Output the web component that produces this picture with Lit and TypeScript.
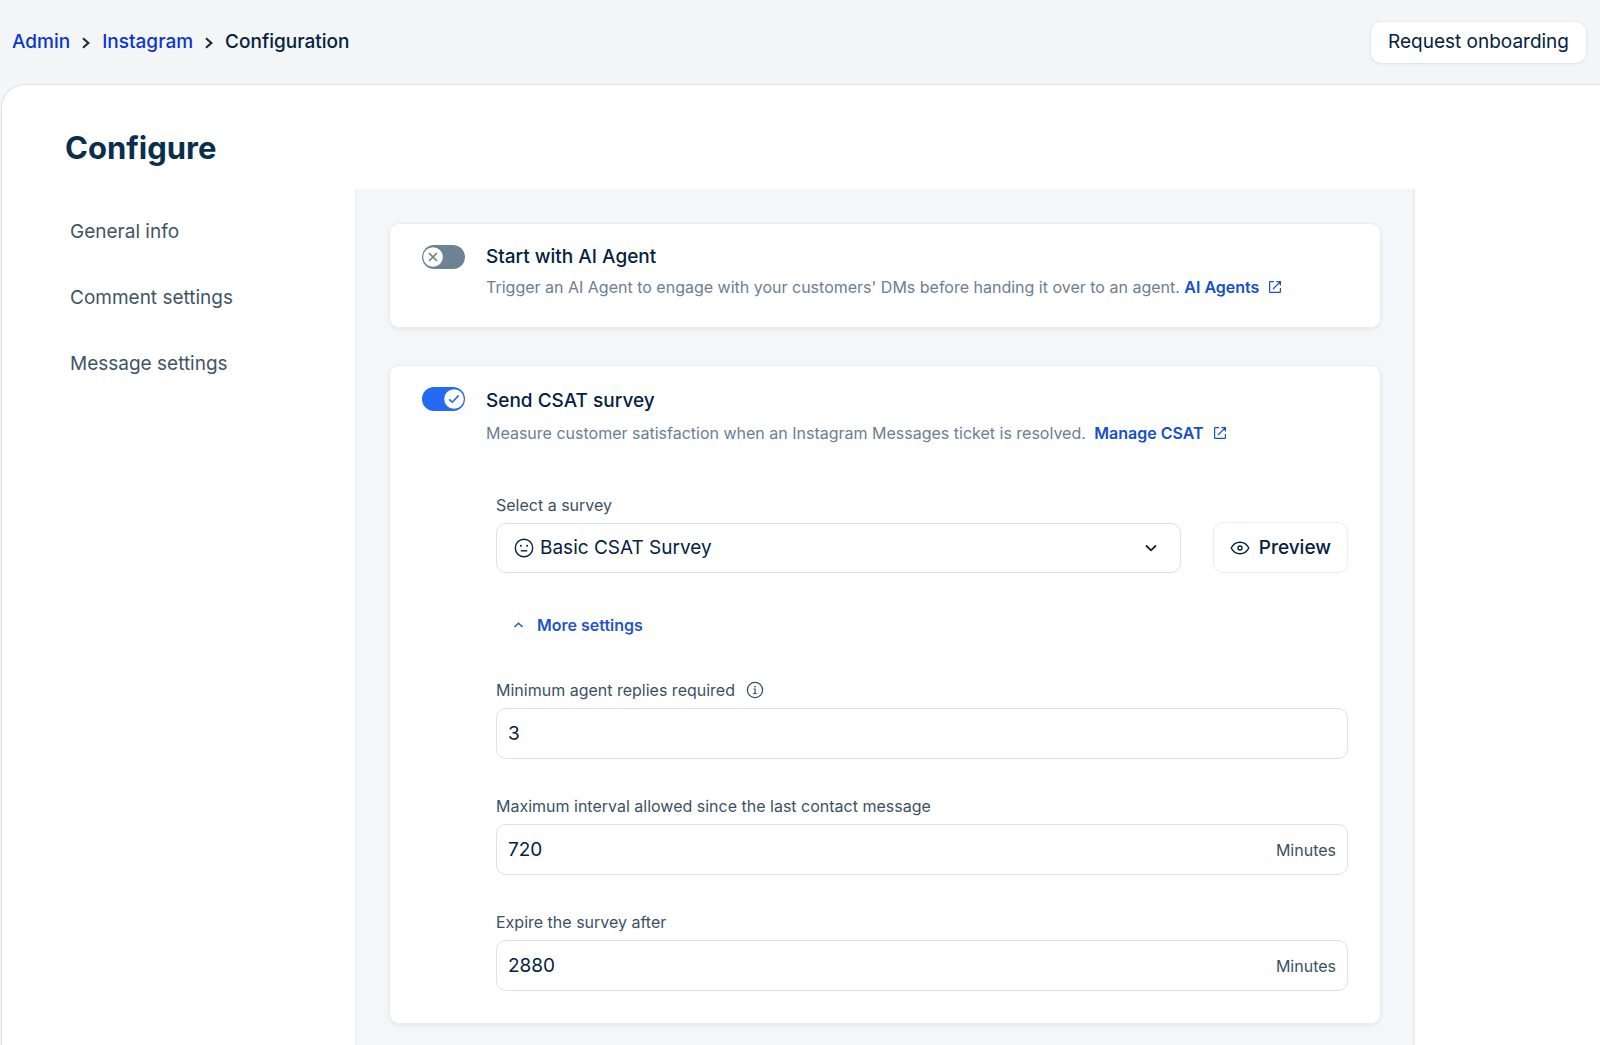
import { LitElement, html, css, svg, nothing } from "lit";
import { customElement, property, state } from "lit/decorators.js";

const chevronRight = html`<svg class="crumb-sep" viewBox="0 0 10 14" aria-hidden="true">
  <path d="M2 3.3 7.3 8 2 12.7" fill="none" stroke="currentColor" stroke-width="2.2" />
</svg>`;

const external = html`<svg class="external" viewBox="0 0 14 14" aria-hidden="true">
  <path d="M6 1.6H2.2Q1.6 1.6 1.6 2.2V11.8Q1.6 12.4 2.2 12.4H11.8Q12.4 12.4 12.4 11.8V8M8.4 1.6H12.4V5.6M12.2 1.8 5 9"
    fill="none" stroke="currentColor" stroke-width="1.2" />
</svg>`;

@customElement("toggle-switch")
export class ToggleSwitch extends LitElement {
  @property({ type: Boolean }) checked = false;
  @property() label = "";

  static styles = css`
    :host {
      display: block;
      flex: none;
    }
    .wrap {
      display: grid;
      cursor: pointer;
    }
    .input,
    .knob {
      grid-area: 1 / 1;
    }
    .input {
      appearance: none;
      margin: 0;
      width: 43px;
      height: 24px;
      border-radius: 12px;
      background: #6d8294;
      cursor: pointer;
    }
    .input:checked {
      background: #256bf1;
    }
    .knob {
      width: 20px;
      height: 20px;
      margin: 2px 1px;
      pointer-events: none;
      color: #6d8294;
    }
    .input:checked + .knob {
      justify-self: end;
      color: #256bf1;
    }
  `;

  private onChange(e: Event) {
    this.checked = (e.target as HTMLInputElement).checked;
    this.dispatchEvent(new CustomEvent("toggle", { detail: this.checked }));
  }

  render() {
    return html`<label class="wrap">
      <input class="input" type="checkbox" role="switch" aria-label=${this.label}
        .checked=${this.checked} @change=${this.onChange} />
      <svg class="knob" viewBox="0 0 20 20" aria-hidden="true">
        <circle cx="10" cy="10" r="9.8" fill="#fff" />
        ${this.checked
          ? svg`<path d="M5.2 10.4 8.4 13.2 14.6 6.4" fill="none" stroke="currentColor" stroke-width="1.6" />`
          : svg`<path d="M6 6 14 14M14 6 6 14" fill="none" stroke="currentColor" stroke-width="1.7" />`}
      </svg>
    </label>`;
  }
}

@customElement("number-field")
export class NumberField extends LitElement {
  @property() label = "";
  @property() value = "";
  @property() unit = "";
  @property({ type: Boolean }) info = false;

  static styles = css`
    :host {
      display: block;
    }
    .head {
      display: flex;
      align-items: center;
      gap: 11px;
      height: 24px;
      margin-bottom: 6px;
      color: #3b5163;
      font-size: 16px;
    }
    .info {
      display: flex;
      padding: 0;
      border: 0;
      background: none;
      color: inherit;
    }
    .info svg {
      width: 18px;
      height: 18px;
    }
    .box {
      display: flex;
      align-items: center;
      box-sizing: border-box;
      height: 51px;
      padding: 0 11px;
      border: 1px solid #dce2e8;
      border-radius: 10px;
      background: #fff;
    }
    .box:focus-within {
      border-color: #256bf1;
    }
    .input {
      flex: 1;
      min-width: 0;
      padding: 0;
      border: 0;
      outline: 0;
      background: none;
      color: #04223f;
      font: inherit;
      font-size: 19px;
    }
    .unit {
      color: #3b5163;
      font-size: 16px;
    }
  `;

  render() {
    return html`<div class="head">
        <label for="field">${this.label}</label>
        ${this.info
          ? html`<button class="info" type="button" aria-label="About ${this.label}">
              <svg viewBox="0 0 18 18" aria-hidden="true">
                <circle cx="9" cy="9" r="7.6" fill="none" stroke="currentColor" stroke-width="1.3" />
                <path d="M7.4 8H9.1V12.4M7.2 12.5H10.9" fill="none" stroke="currentColor" stroke-width="1.2" />
                <circle cx="9" cy="5.6" r="0.9" fill="currentColor" />
              </svg>
            </button>`
          : nothing}
      </div>
      <div class="box">
        <input id="field" class="input" type="text" inputmode="numeric" .value=${this.value} />
        ${this.unit ? html`<span class="unit">${this.unit}</span>` : nothing}
      </div>`;
  }
}

@customElement("app-root")
export class AppRoot extends LitElement {
  @state() private more = true;

  static styles = css`
    :host {
      display: flex;
      flex-direction: column;
      min-height: 100vh;
      background: #f3f5f7;
      color: #04223f;
      font-family: Inter, "Liberation Sans", sans-serif;
      font-size: 16px;
      line-height: 24px;
    }
    a {
      text-decoration: none;
    }
    button {
      font: inherit;
      color: inherit;
      cursor: pointer;
    }
    .top {
      display: flex;
      align-items: center;
      justify-content: space-between;
      height: 84px;
      padding: 0 14px 0 12px;
    }
    .crumbs {
      display: flex;
      align-items: center;
      gap: 11px;
      font-size: 19px;
      font-weight: 500;
    }
    .crumbs a {
      color: #0a35d0;
    }
    .crumb-sep {
      width: 10px;
      height: 14px;
      color: #1c2e3e;
    }
    .onboard {
      height: 41px;
      padding: 0 17px;
      border: 0;
      border-radius: 10px;
      background: #fff;
      box-shadow: 0 0 2px #d8dee6, 0 1px 3px #e0e5ea;
      font-size: 19px;
    }
    .sheet {
      flex: 1;
      display: flex;
      flex-direction: column;
      margin-left: 1px;
      border: 1px solid #dce1e7;
      border-width: 1px 0 0 1px;
      border-top-left-radius: 24px;
      background: #fff;
    }
    .title {
      margin: 0;
      padding: 43px 63px 21px;
      color: #0a2f4c;
      font-size: 31px;
      line-height: 40px;
      font-weight: 700;
    }
    .columns {
      flex: 1;
      display: grid;
      grid-template-columns: 353px minmax(0, 1060px);
    }
    .nav {
      display: flex;
      flex-direction: column;
      align-items: flex-start;
      gap: 42px;
      padding: 31px 20px 0 68px;
    }
    .nav a {
      color: #3f5567;
      font-size: 19px;
    }
    .content {
      display: flex;
      flex-direction: column;
      gap: 37px;
      padding: 34px 32px 21px 33px;
      border: 1px solid #e8edf3;
      border-width: 0 2px 0 1px;
      background: #f5f6f8;
    }
    .card {
      display: flex;
      gap: 21px;
      padding: 21px 32px 28px;
      border: 1px solid #e9edf3;
      border-radius: 10px;
      background: #fff;
      box-shadow: 0 2px 4px #e4e8ec;
    }
    .card-body {
      flex: 1;
      min-width: 0;
    }
    .card-title {
      margin: 0;
      font-size: 19px;
      line-height: 24px;
      font-weight: 500;
    }
    .card-text {
      margin: 6px 0 0;
      color: #6b8092;
    }
    .spaced {
      padding-top: 2px;
    }
    .spaced .card-text {
      margin-top: 8px;
    }
    .link {
      color: #1450c8;
      font-weight: 600;
    }
    .spaced .link {
      margin-left: 4px;
    }
    .external {
      width: 14px;
      height: 14px;
      margin-left: 5px;
      vertical-align: -1px;
    }
    .form {
      display: flex;
      flex-direction: column;
      margin: 48px 0 4px 10px;
    }
    .survey-label {
      margin-bottom: 5px;
      color: #3b5163;
    }
    .survey-row {
      display: flex;
      align-items: flex-end;
      gap: 32px;
    }
    .picker {
      flex: 1;
      min-width: 0;
      display: grid;
      align-items: center;
    }
    .picker > * {
      grid-area: 1 / 1;
    }
    .select {
      appearance: none;
      width: 100%;
      height: 50px;
      padding: 0 48px 0 43px;
      border: 1px solid #dce2e8;
      border-radius: 10px;
      background: #fff;
      color: inherit;
      font: inherit;
      font-size: 19px;
    }
    .face {
      width: 20px;
      height: 20px;
      margin-left: 18px;
      pointer-events: none;
    }
    .chevron {
      justify-self: end;
      width: 14px;
      height: 10px;
      margin-right: 23px;
      pointer-events: none;
    }
    .preview {
      display: flex;
      align-items: center;
      gap: 9px;
      height: 51px;
      padding: 0 16px;
      border: 1px solid #e9edf3;
      border-radius: 10px;
      background: #fff;
      font-size: 19px;
      font-weight: 500;
    }
    .eye {
      width: 20px;
      height: 14px;
    }
    .more {
      display: flex;
      align-items: center;
      align-self: flex-start;
      gap: 13px;
      margin: 40px 0 41px 17px;
      padding: 0;
      border: 0;
      background: none;
      color: #1f55cc;
      font-weight: 600;
    }
    .caret {
      width: 11px;
      height: 8px;
    }
    .caret.closed {
      rotate: 180deg;
    }
    .fields {
      display: flex;
      flex-direction: column;
      gap: 35px;
    }
  `;

  render() {
    return html`
      <header class="top">
        <nav class="crumbs" aria-label="Breadcrumb">
          <a href="#admin">Admin</a>${chevronRight}
          <a href="#instagram">Instagram</a>${chevronRight}
          <span aria-current="page">Configuration</span>
        </nav>
        <button class="onboard" type="button">Request onboarding</button>
      </header>
      <main class="sheet">
        <h1 class="title">Configure</h1>
        <div class="columns">
          <nav class="nav" aria-label="Settings">
            <a href="#general">General info</a>
            <a href="#comments">Comment settings</a>
            <a href="#messages">Message settings</a>
          </nav>
          <div class="content">
            <section class="card">
              <toggle-switch label="Start with AI Agent"></toggle-switch>
              <div class="card-body">
                <h2 class="card-title">Start with AI Agent</h2>
                <p class="card-text">
                  Trigger an AI Agent to engage with your customers' DMs before handing it over to an agent.
                  <a class="link" href="#agents">AI Agents ${external}</a>
                </p>
              </div>
            </section>
            <section class="card">
              <toggle-switch label="Send CSAT survey" checked></toggle-switch>
              <div class="card-body spaced">
                <h2 class="card-title">Send CSAT survey</h2>
                <p class="card-text">
                  Measure customer satisfaction when an Instagram Messages ticket is resolved.
                  <a class="link" href="#csat">Manage CSAT ${external}</a>
                </p>
                <form class="form">
                  <label class="survey-label" for="survey">Select a survey</label>
                  <div class="survey-row">
                    <div class="picker">
                      <select id="survey" class="select">
                        <option>Basic CSAT Survey</option>
                      </select>
                      <svg class="face" viewBox="0 0 20 20" aria-hidden="true">
                        <circle cx="10" cy="10" r="8.7" fill="none" stroke="currentColor" stroke-width="1.4" />
                        <circle cx="6.9" cy="7.8" r="1" fill="currentColor" />
                        <circle cx="13.1" cy="7.8" r="1" fill="currentColor" />
                        <path d="M6.8 12.8H13.2" fill="none" stroke="currentColor" stroke-width="1.4" />
                      </svg>
                      <svg class="chevron" viewBox="0 0 14 10" aria-hidden="true">
                        <path d="M2 2.5 7 7.3 12 2.5" fill="none" stroke="currentColor" stroke-width="1.8" />
                      </svg>
                    </div>
                    <button class="preview" type="button">
                      <svg class="eye" viewBox="0 0 20 14" aria-hidden="true">
                        <path d="M1.2 7Q4.2 1.2 10 1.2T18.8 7Q15.8 12.8 10 12.8T1.2 7Z" fill="none" stroke="currentColor" stroke-width="1.4" />
                        <circle cx="10" cy="7" r="2" fill="none" stroke="currentColor" stroke-width="1.4" />
                      </svg>
                      Preview
                    </button>
                  </div>
                  <button class="more" type="button" aria-expanded=${this.more ? "true" : "false"}
                    @click=${() => (this.more = !this.more)}>
                    <svg class="caret ${this.more ? "" : "closed"}" viewBox="0 0 11 8" aria-hidden="true">
                      <path d="M1.5 6 5.5 2.2 9.5 6" fill="none" stroke="currentColor" stroke-width="1.5" />
                    </svg>
                    More settings
                  </button>
                  ${this.more
                    ? html`<div class="fields">
                        <number-field label="Minimum agent replies required" value="3" info></number-field>
                        <number-field label="Maximum interval allowed since the last contact message" value="720" unit="Minutes"></number-field>
                        <number-field label="Expire the survey after" value="2880" unit="Minutes"></number-field>
                      </div>`
                    : nothing}
                </form>
              </div>
            </section>
          </div>
        </div>
      </main>
    `;
  }
}
